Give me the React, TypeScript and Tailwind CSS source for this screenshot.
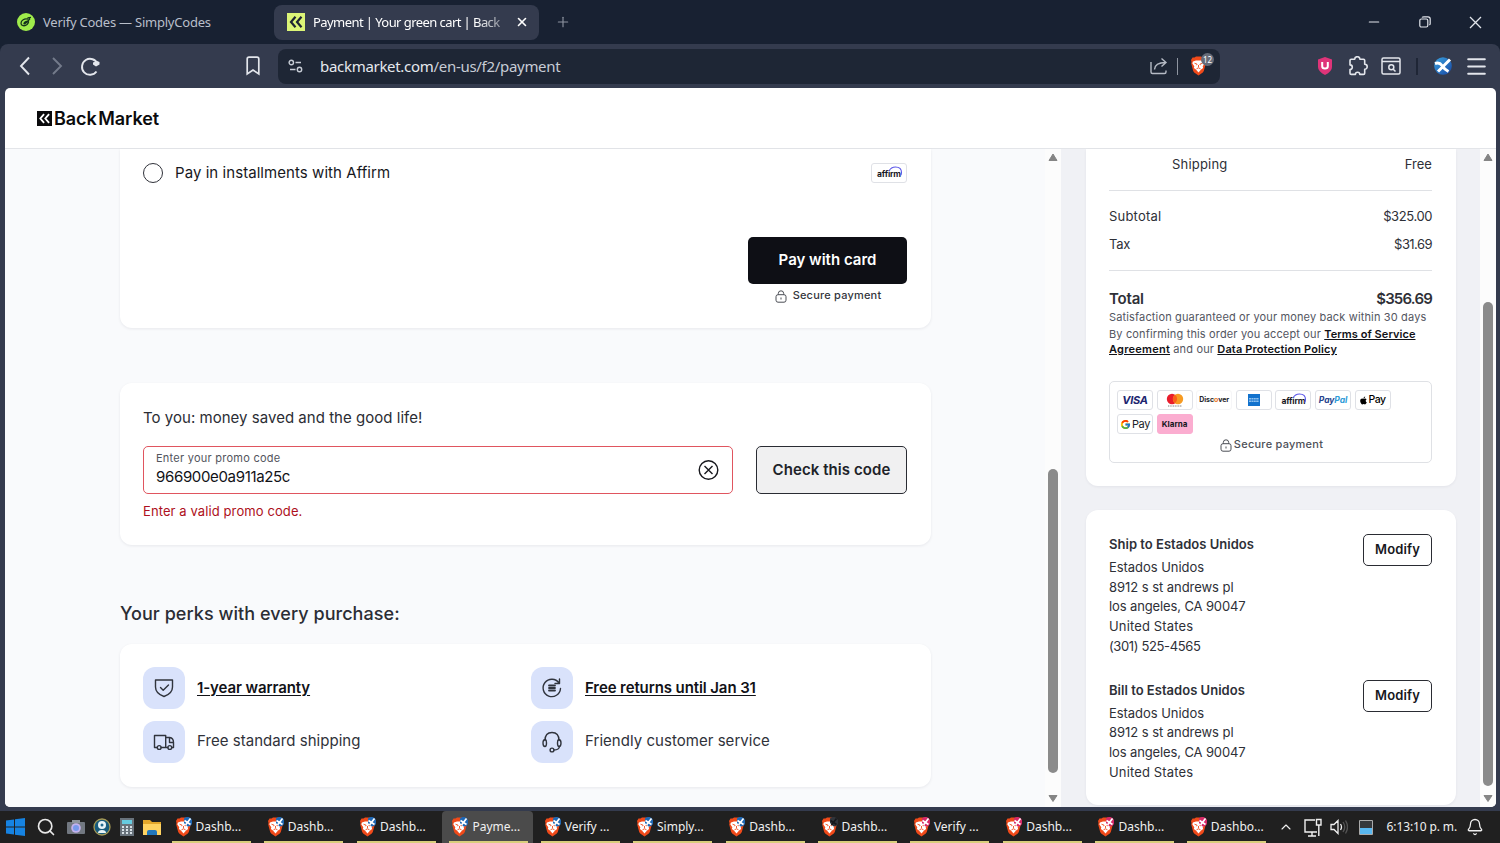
import * as React from 'react';
import { Bell, ChevronUp, Menu, Minus, Plus, Search, X } from 'lucide-react';
import { FaApple } from 'react-icons/fa';
import { FcGoogle } from 'react-icons/fc';

const TASKS = [
  { label: 'Dashb...', badge: '#1f68b4' },
  { label: 'Dashb...', badge: '#1f68b4' },
  { label: 'Dashb...', badge: '#1f68b4' },
  { label: 'Payme...', badge: '#1f68b4', active: true },
  { label: 'Verify ...', badge: '#1f68b4' },
  { label: 'Simply...', badge: '#1f68b4' },
  { label: 'Dashb...', badge: '#1f68b4' },
  { label: 'Dashb...', badge: '#30343a' },
  { label: 'Verify ...', badge: '#d52a68' },
  { label: 'Dashb...', badge: '#d52a68' },
  { label: 'Dashb...', badge: '#d52a68' },
  { label: 'Dashbo...', badge: '#d52a68' },
];

const BraveIcon = ({ badge }: { badge?: string }): React.ReactNode => (
  <svg width="17" height="20" viewBox="0 0 17 20" className="shrink-0">
    <path d="M4.500 1.500 6 .500h5l1.500 1h2L16 4l-.5 2 .3 1.500-2 7.500-1 1.500L8.500 19.500 4.200 16.500l-1-1.500-2-7.500L1.500 6 1 4l1.500-2.500z" fill="#f04a1a" />
    <path d="M3 5.500 6 4.500h5l3 1 .7 1.700-2 3 .4 1.800-2 1.500L8.500 16.500 5.900 13.500 3.900 12l.4-1.800-2-3z" fill="#fff" />
    <path d="M4.500 7.200l2.600 1-.6 1M12.500 7.200l-2.600 1 .6 1M8.500 9v2.200M6.500 12.800l2-1 2 1" stroke="#f04a1a" strokeWidth=".9" fill="none" />
    {badge && (
      <>
        <path d="M9 1.500A4.800 4.800 0 0 1 17 3v4a5 5 0 0 1-4.500 2.500L9 6z" fill={badge} />
        <path d="M9.500 3.500l6 4M15.500 1.500l-5 6.500" stroke={badge === '#30343a' ? '#15171a' : '#fff'} strokeWidth="1.700" />
      </>
    )}
  </svg>
);

const LockIcon = ({ className }: { className?: string }): React.ReactNode => (
  <svg width="12" height="13" viewBox="0 0 12 13" fill="none" stroke="#4b4e55" className={className}>
    <rect x="1" y="4.700" width="10" height="7.500" rx="2" />
    <path d="M3.300 4.700V3.500a2.700 2.700 0 0 1 5.400 0v1.200M6 7.500v2" />
  </svg>
);

const Chevrons = ({ size, bg, fg }: { size: number; bg: string; fg: string }): React.ReactNode => (
  <svg width={size} height={size} viewBox="0 0 18 18" className="shrink-0">
    <rect width="18" height="18" fill={bg} />
    <path d="M8.500 3.800 4 9l4.500 5.200M14.500 3.800 10 9l4.500 5.200" fill="none" stroke={fg} strokeWidth="2.200" />
  </svg>
);

const TitleBar = (): React.ReactNode => (
  <div className="flex h-11 items-center text-[13px] text-[#b9bfca]">
    <div className="flex w-[274px] items-center pl-[17px]">
      <svg width="18" height="18" viewBox="0 0 18 18">
        <circle cx="9" cy="9" r="9" fill="#9fec4b" />
        <path d="M11 6.200C7.500 5 4 7.500 4 10.200c0 2.500 3.500 3.500 6 1.300 1.500-1.500 2-3 1-3.300-2-.4-4.500 2-4 2.600.5.500 3-1.300 6-5.300M10.500 4.800l3.500-.5" fill="none" stroke="#14331c" strokeWidth="1.300" />
      </svg>
      <span className="relative top-px ml-2 tracking-[-0.230px] whitespace-nowrap">Verify Codes — SimplyCodes</span>
    </div>
    <div className="flex h-[35px] w-[265px] items-center rounded-lg bg-[#343b4e] pl-[13px] text-white">
      <Chevrons size={18} bg="#dcf577" fg="#1d2433" />
      <span className="relative top-px ml-2 w-[190px] tracking-[-0.570px] whitespace-nowrap [mask-image:linear-gradient(to_right,#000_86%,#0006_100%)]">
        Payment | Your green cart | Back
      </span>
      <X size={14} strokeWidth={2.800} className="ml-[12px] shrink-0" />
    </div>
    <Plus size={16} strokeWidth={1.700} className="ml-4 text-[#8d93a0]" />
    <div className="ml-auto flex items-center pr-[18px] text-[#e2e5eb]">
      <Minus size={16} strokeWidth={1.800} className="mr-[37px]" />
      <svg width="12" height="12" viewBox="0 0 12 12" fill="none" stroke="currentColor" strokeWidth="1.200" className="mr-[38px]">
        <rect x=".8" y="3" width="8" height="8" rx="1.500" />
        <path d="M3 1.500Q3.500.8 5 .8h4q2.200 0 2.200 2.200v4.500q0 1-.8 1.500" />
      </svg>
      <svg width="13" height="13" viewBox="0 0 13 13" stroke="currentColor" strokeWidth="1.300">
        <path d="M1 1l11 11M12 1 1 12" />
      </svg>
    </div>
  </div>
);

const Toolbar = (): React.ReactNode => (
  <div className="flex h-11 items-center rounded-t-lg bg-[#343b4e] text-[#e3e6ec]">
    <svg width="86" height="24" viewBox="0 0 86 24" fill="none" stroke="currentColor" strokeWidth="1.900" className="ml-4">
      <path d="M13 3.500 5 12l8 8.500" />
      <path d="M37 4l8 8-8 8" stroke="#747b8b" />
      <path d="M80.500 17.500a8 8 0 1 1 1-7.500" />
      <path d="M77 8.500l4-1.500 2.500 1v2.500L80 12.500l-3-2z" fill="currentColor" stroke="none" />
    </svg>
    <svg width="14" height="20" viewBox="0 0 14 20" fill="none" stroke="currentColor" strokeWidth="1.700" className="ml-[144px]">
      <path d="M1.200 18V3q0-1.800 1.800-1.800h8q1.800 0 1.800 1.800v15L7 14z" />
    </svg>
    <div className="ml-[18px] flex h-[35px] w-[942px] items-center rounded-lg bg-[#1e2635] pl-[10px]">
      <svg width="15" height="14" viewBox="0 0 15 14" fill="none" stroke="#c7ccd5" strokeWidth="1.400">
        <circle cx="3.300" cy="3.500" r="2.200" />
        <circle cx="11.500" cy="10.500" r="2.200" />
        <path d="M7.500 3.500H13M2 10.500h5.500" />
      </svg>
      <span className="ml-[17px] text-[15px] tracking-[-0.300px] text-[#c7ccd5]">
        <span className="text-[#e6e9ee]">backmarket.com</span>/en-us/f2/payment
      </span>
      <svg width="18" height="18" viewBox="0 0 18 18" fill="none" stroke="#b6bbc5" strokeWidth="1.400" className="ml-auto">
        <path d="M1 5v10q0 1.500 1.500 1.500h12q1.500 0 1.500-1.500v-1.500M4.500 12.500q.5-7 11-7M11.500 1.500 16 5.500l-4.500 4" />
      </svg>
      <span className="mr-3 ml-[9px] h-[17px] w-px bg-[#8e94a0]" />
      <div className="relative mr-[13px] h-5 w-[17px]">
        <BraveIcon />
        <span className="absolute -top-[3px] left-[11px] flex h-[13px] w-[13px] items-center justify-center rounded-full bg-[#656b78] text-[8px] text-white">12</span>
      </div>
    </div>
    <svg width="16" height="20" viewBox="0 0 16 20" className="ml-[97px]">
      <path d="M8 1l7 2.500V11q0 4.500-7 8-7-3.500-7-8V3.500z" fill="#df3479" />
      <path d="M5.200 6v4.200q0 2.300 2.800 2.300t2.800-2.300V6" fill="none" stroke="#fff" strokeWidth="2" />
    </svg>
    <svg width="20" height="20" viewBox="0 0 20 20" fill="none" stroke="currentColor" strokeWidth="1.600" className="ml-[15px]">
      <path d="M2 4.500q0-1.200 1.200-1.200h3.500a2.600 2.600 0 0 1 5.200 0h3.600q1.200 0 1.200 1.200v3.700a2.500 2.500 0 0 1 0 5v4q0 1.200-1.200 1.200h-3.700a2.200 2.200 0 0 0-4.400 0H3.200Q2 18.400 2 17.200v-3.700a2.300 2.300 0 0 0 0-4.600z" strokeLinejoin="round" />
    </svg>
    <svg width="20" height="18" viewBox="0 0 20 18" fill="none" stroke="currentColor" strokeWidth="1.500" className="ml-[13px]">
      <rect x="1" y="1" width="18" height="16" rx="1.500" />
      <path d="M1 4.500h18M12 12l2.500 2.500" />
      <circle cx="10.300" cy="10.200" r="2.500" />
    </svg>
    <span className="ml-[15px] h-[17px] w-[2px] bg-[#1f2636]" />
    <svg width="18" height="18" viewBox="0 0 18 18" className="ml-4">
      <defs>
        <linearGradient id="profile" x1="0" y1="0" x2="1" y2="1">
          <stop offset="0" stopColor="#3aa2df" />
          <stop offset="1" stopColor="#1747a4" />
        </linearGradient>
      </defs>
      <circle cx="9" cy="9" r="8.800" fill="url(#profile)" />
      <path d="M1 6.500q4.500-1.500 7 2 2.500 4 6.500 6M16 2.500 4 14.500" fill="none" stroke="#fff" strokeWidth="3" />
    </svg>
    <Menu size={25} strokeWidth={1.900} className="ml-[12px]" />
  </div>
);

const AffirmLogo = (): React.ReactNode => (
  <span className="relative pt-[3px] text-[8.500px] leading-none font-bold tracking-[-0.200px] text-[#17181f]">
    affirm
    <svg width="15" height="11" viewBox="0 0 15 11" className="absolute -top-[1px] left-[11px]">
      <path d="M1 5Q3 1 7.500 1q6 0 6 5.500 0 2-1 3" fill="none" stroke="#5a55e8" strokeWidth="1.100" />
    </svg>
  </span>
);

const PayBadge = ({ children, className = 'border-[#dfe1e6] bg-white' }: { children: React.ReactNode; className?: string }): React.ReactNode => (
  <span className={`flex h-5 w-9 items-center justify-center rounded-[3px] border ${className}`}>
    {children}
  </span>
);

const PaymentCard = (): React.ReactNode => (
  <section className="h-[179px] rounded-b-xl bg-white pt-[14px] pr-6 pl-[23px] shadow-[0_1px_3px_rgba(20,25,45,0.08)]">
    <div className="flex h-5 items-center">
      <span className="h-5 w-5 rounded-full border-[1.500px] border-[#30323a]" />
      <span className="ml-3 text-[15px] tracking-[0.060px] text-[#17181d]">Pay in installments with Affirm</span>
      <span className="ml-auto"><PayBadge><AffirmLogo /></PayBadge></span>
    </div>
    <div className="mt-[54px] ml-auto w-[159px]">
      <button className="h-[47px] w-full rounded-[5px] bg-[#0e0f15] text-[15px] font-semibold text-white">Pay with card</button>
      <p className="mt-[4px] flex items-center justify-center pl-px text-[11px] leading-[15px] font-medium tracking-[0.200px] text-[#34363d]">
        <LockIcon className="relative top-px mr-[6px]" />
        Secure payment
      </p>
    </div>
  </section>
);

const PromoCard = (): React.ReactNode => (
  <section className="mt-[55px] h-[162px] rounded-xl bg-white px-[23px] pt-[25px] shadow-[0_1px_3px_rgba(20,25,45,0.08)]">
    <h3 className="text-[15px] leading-5 tracking-[0.030px] text-[#2b2d34]">To you: money saved and the good life!</h3>
    <div className="mt-[18px] flex gap-[23px]">
      <div className="flex h-[48px] w-[590px] items-center rounded-[5px] border border-[#e0555f] pr-[13px] pl-3">
        <div>
          <div className="text-[11px] leading-[14px] tracking-[0.250px] text-[#52555d]">Enter your promo code</div>
          <div className="mt-px mb-px text-[15px] leading-[22px] tracking-[-0.340px] text-[#111217]">966900e0a911a25c</div>
        </div>
        <svg width="22" height="22" viewBox="0 0 22 22" fill="none" stroke="#17181d" strokeWidth="1.400" className="ml-auto">
          <circle cx="11.500" cy="11" r="9.300" />
          <path d="M7.500 7l8 8M15.500 7l-8 8" />
        </svg>
      </div>
      <button className="h-[48px] w-[151px] rounded-[5px] border border-[#2a2c33] bg-[#f0f0f1] text-[15px] font-semibold tracking-[0.080px] text-[#202228]">Check this code</button>
    </div>
    <p className="mt-[8px] text-[13px] leading-[18px] tracking-[0.100px] text-[#ad1020]">Enter a valid promo code.</p>
  </section>
);

const Perk = ({ icon, label, link }: { icon: React.ReactNode; label: string; link?: boolean }): React.ReactNode => (
  <div className="flex items-center gap-3">
    <span className="flex h-[42px] w-[42px] items-center justify-center rounded-xl bg-[#d9e2fb]">
      <svg width="22" height="22" viewBox="0 0 22 22" fill="none" stroke="#30343d" strokeWidth="1.400" strokeLinecap="round" strokeLinejoin="round">
        {icon}
      </svg>
    </span>
    <span className={link ? 'text-[15px] font-semibold tracking-[-0.100px] text-[#111217] underline underline-offset-2' : 'relative -top-px text-[15px] tracking-[0.040px] text-[#30323a]'}>{label}</span>
  </div>
);

const Perks = (): React.ReactNode => (
  <>
    <h2 className="mt-[56px] text-[18px] leading-[26px] font-medium tracking-[0.050px] text-[#2b2d34]">Your perks with every purchase:</h2>
    <section className="mt-[17px] grid h-[143px] grid-cols-[388px_1fr] content-start gap-y-3 rounded-xl bg-white px-[23px] pt-[23px] shadow-[0_1px_3px_rgba(20,25,45,0.08)]">
      <Perk link label="1-year warranty" icon={<path d="M2.500 3h17v7q0 6.500-8.500 9.500-8.500-3-8.500-9.500zM7.500 10.500l2.700 2.700L15.500 8" />} />
      <Perk link label="Free returns until Jan 31" icon={<><path d="M18 6a8.700 8.700 0 1 0 1.500 5.500M18.500 2v4.500H14" /><path d="M8 8.500h6M8 11h6M8 13.500h6" strokeWidth="1.800" /></>} />
      <Perk label="Free standard shipping" icon={<><path d="M4.200 16.500H1.500v-12h11.200v12H8.200M12.700 6.500h4q3.800.5 3.800 5v5h-1.700M16.500 7v4.500h4M12.700 16.500h2" /><circle cx="6.200" cy="16.500" r="1.900" /><circle cx="16.800" cy="16.500" r="1.900" /></>} />
      <Perk label="Friendly customer service" icon={<><path d="M4 9.500Q4 1.500 11 1.500t7 8M18.500 15.500q-.5 3.500-5.500 3.500" /><path d="M4.500 8.500q-2.500 0-2.500 3.500t2 3.500q1.500 0 1.500-3.500 0-3-1-3.500zM17.500 8.500q2.500 0 2.500 3.500t-2 3.500q-1.500 0-1.500-3.500 0-3 1-3.500z" /><circle cx="11" cy="19" r="1.900" /></>} />
    </section>
  </>
);

const ScrollBar = ({ before, thumb }: { before: string; thumb: string }): React.ReactNode => (
  <div className="flex w-4 shrink-0 flex-col items-center bg-[#fcfcfc] pt-[3px] pb-1">
    <svg width="10" height="10" viewBox="0 0 10 10"><path d="M5 2l4 6.500H1z" fill="#858585" stroke="#858585" strokeLinejoin="round" /></svg>
    <div className={before} />
    <div className={`w-[10px] rounded-full bg-[#8b8b8b] ${thumb}`} />
    <svg width="10" height="10" viewBox="0 0 10 10" className="mt-auto"><path d="M5 8.500l4-6H1z" fill="#858585" stroke="#858585" strokeLinejoin="round" /></svg>
  </div>
);

const Address = ({ title, lines }: { title: string; lines: string[] }): React.ReactNode => (
  <div className="flex items-start justify-between">
    <div className="pt-px text-[13px] leading-[19.800px] tracking-[-0.050px] text-[#2e3037]">
      <h4 className="mb-[3px] font-semibold tracking-[0.020px]">{title}</h4>
      {lines.map((line) => (
        <p key={line} className={line.startsWith('(') ? 'tracking-[-0.370px]' : line.includes('CA') ? 'tracking-[-0.120px]' : line === 'United States' ? 'tracking-[0.150px]' : ''}>{line}</p>
      ))}
    </div>
    <button className="h-8 w-[69px] rounded-[5px] border border-[#2a2c33] text-[13px] font-semibold tracking-[0.150px] text-[#17181d]">Modify</button>
  </div>
);

const ADDRESS = ['Estados Unidos', '8912 s st andrews pl', 'los angeles, CA 90047', 'United States'];

const Summary = (): React.ReactNode => (
  <section className="h-[337px] rounded-b-xl bg-white pt-[5px] pr-6 pl-[23px] text-[13px] leading-5 text-[#2e3037] shadow-[0_1px_3px_rgba(20,25,45,0.06)]">
    <div className="flex justify-between border-b border-[#dfe1e5] pb-4 pl-[63px]">
      <span className="tracking-[0.200px]">Shipping</span>
      <span className="tracking-[0.050px]">Free</span>
    </div>
    <div className="mt-[15px] flex justify-between">
      <span className="tracking-[0.200px]">Subtotal</span>
      <span className="tracking-[-0.400px]">$325.00</span>
    </div>
    <div className="mt-[8px] flex justify-between border-b border-[#dfe1e5] pb-4">
      <span className="tracking-[-0.300px]">Tax</span>
      <span className="tracking-[-0.550px]">$31.69</span>
    </div>
    <div className="mt-[18px] flex justify-between text-[15px] font-semibold">
      <span className="tracking-[-0.200px]">Total</span>
      <span className="tracking-[-0.800px]">$356.69</span>
    </div>
    <div className="text-[11px] leading-4 tracking-[0.150px] whitespace-nowrap text-[#53565f]">
      <p>Satisfaction guaranteed or your money back within 30 days</p>
      <p className="relative top-px">By confirming this order you accept our <b className="font-semibold tracking-[0.060px] text-[#111217] underline">Terms of Service</b></p>
      <p><b className="font-semibold tracking-[0.240px] text-[#111217] underline">Agreement</b> and our <b className="font-semibold tracking-[0.120px] text-[#111217] underline">Data Protection Policy</b></p>
    </div>
    <div className="mt-6 h-[82px] rounded-[5px] border border-[#dfe1e5] px-[7px] pt-2">
      <div className="flex flex-wrap gap-x-[3.600px] gap-y-[4px]">
        <PayBadge><span className="text-[11px] font-bold tracking-[-0.200px] text-[#20256f] italic">VISA</span></PayBadge>
        <PayBadge>
          <svg width="18" height="14" viewBox="0 0 18 14"><circle cx="6" cy="6" r="5.200" fill="#e91d2c" /><circle cx="12" cy="6" r="5.200" fill="#f79b22" /><path d="M9 1.800a5.200 5.200 0 0 1 0 8.400 5.200 5.200 0 0 1 0-8.400" fill="#fa5f1b" /><path d="M2 13h14" stroke="#777" strokeDasharray="1 .7" /></svg>
        </PayBadge>
        <PayBadge className="border-[#f6f6f8] bg-white"><span className="text-[7px] font-bold tracking-[-0.050px] text-[#25262b]">Disc<span className="text-[#ec7625]">o</span>ver</span></PayBadge>
        <PayBadge><svg width="12" height="12" viewBox="0 0 12 12"><path d="M0 0h12v12H0z" fill="#1272cd" /><path d="M1 4.700h10M1 7.300h10" stroke="#8fc1ef" strokeWidth="1.500" strokeDasharray="2 .4" /></svg></PayBadge>
        <PayBadge><AffirmLogo /></PayBadge>
        <PayBadge><span className="text-[8.500px] font-bold tracking-[-0.100px] text-[#26438d] italic">Pay<span className="text-[#2d9bd8]">Pal</span></span></PayBadge>
        <PayBadge><FaApple size={9} color="#000" className="shrink-0" /><span className="text-[10.500px] font-medium tracking-[-0.400px] text-black">Pay</span></PayBadge>
        <PayBadge><FcGoogle size={11} className="shrink-0" /><span className="ml-px text-[11px] tracking-[-0.400px] text-[#202228]">Pay</span></PayBadge>
        <PayBadge className="border-[#fbadd0] bg-[#fbadd0]"><span className="text-[8px] font-bold text-[#17181d]">Klarna</span></PayBadge>
      </div>
      <p className="flex items-center justify-center pl-[2px] text-[11px] leading-5 font-medium tracking-[0.250px] text-[#4d5058]">
        <LockIcon className="relative top-px mr-[2px]" />
        Secure payment
      </p>
    </div>
  </section>
);

const TaskBar = (): React.ReactNode => (
  <footer className="flex h-8 items-center bg-[#202020] text-[12px] text-[#f0f0f0]">
    <svg width="19" height="18" viewBox="0 0 19 18" className="ml-[6px] shrink-0"><path d="M0 2.500 8 1.500v7H0zM9 1.300 19 0v8.500H9zM0 9.500h8v7L0 15.500zM9 9.500h10V18L9 16.700z" fill="#1683e2" /></svg>
    <Search size={20} strokeWidth={2} className="ml-[11px] shrink-0 text-[#e8e8e8]" />
    <svg width="18" height="16" viewBox="0 0 18 16" className="ml-[11px] shrink-0"><rect y="3" width="18" height="12" rx="1" fill="#727881" /><path d="M5 1h8v3H5z" fill="#8f959d" /><circle cx="9" cy="9" r="4.800" fill="#c3b2ee" /><circle cx="9" cy="9" r="3" fill="#7899ed" /></svg>
    <svg width="18" height="18" viewBox="0 0 18 18" className="ml-2 shrink-0"><circle cx="9" cy="9" r="8" fill="#175b7c" stroke="#a69a56" strokeWidth="1.300" /><path d="M5 15q0-3 4-3t4 3" fill="#e8f4f7" /><circle cx="9" cy="7" r="4" fill="#e8f4f7" /><circle cx="9" cy="7" r="1.500" fill="#236b8e" /></svg>
    <svg width="14" height="18" viewBox="0 0 14 18" className="ml-[9px] shrink-0"><path d="M0 0h14v18H0z" fill="#69737c" /><path d="M2 2h10v4H2z" fill="#66cbe0" /><path d="M2 9h10M2 12h10M2 15h10" stroke="#d9e2e8" strokeWidth="2" strokeDasharray="2 2" /></svg>
    <svg width="18" height="16" viewBox="0 0 18 16" className="ml-[9px] shrink-0"><path d="M0 1h7l2 2h9v13H0z" fill="#e3a72b" /><path d="M0 5h18v11H0z" fill="#ffd361" /><path d="M4 16v-3q0-2 2-2h6q2 0 2 2v3z" fill="#2177bb" /></svg>
    <div className="ml-[4px] flex h-full shrink-0 gap-[1px]">
      {TASKS.map(({ label, badge, active }, i) => (
        <div key={i} className={`flex h-full w-[91.300px] flex-col justify-between pt-[6px] ${active ? 'rounded-t-sm bg-[#4b4b4b]' : ''}`}>
          <span className="flex items-center gap-[4px] pl-[9.500px] whitespace-nowrap"><BraveIcon badge={badge} />{label}</span>
          <span className="ml-[7px] h-[2px] w-[79px] bg-[#d8ce7c]" />
        </div>
      ))}
    </div>
    <ChevronUp size={16} strokeWidth={1.700} className="ml-[6px] shrink-0" />
    <svg width="18" height="19" viewBox="0 0 18 19" fill="none" stroke="currentColor" strokeWidth="1.400" className="ml-[10px] shrink-0"><path d="M11 2H1v12h12M8 14v4M4 18h8M12.500 1.500h4.500V7h-4.500zM14.800 7v11" /></svg>
    <svg width="18" height="16" viewBox="0 0 18 16" fill="none" stroke="currentColor" strokeWidth="1.300" className="ml-2 shrink-0"><path d="M1 5.500h3l4-4v13l-4-4H1zM10.500 5q2 3 0 6" /><path d="M13 3q3.500 5 0 10M15.500 1.500q4 6.500 0 13" stroke="#555" /></svg>
    <svg width="14" height="15" viewBox="0 0 14 15" className="ml-[11px] shrink-0"><path d="M.5.500h13v14H.5z" fill="#35383b" stroke="#aaa" /><path d="M1 8h12v6H1z" fill="#59b8f0" /></svg>
    <span className="ml-[14px] tracking-[-0.120px] whitespace-nowrap">6:13:10 p. m.</span>
    <Bell size={18} strokeWidth={1.700} className="ml-[9px] shrink-0" />
  </footer>
);

const App = (): React.ReactNode => (
  <div className="h-[843px] w-[1500px] overflow-hidden bg-[#182132] font-['Noto_Sans',sans-serif]">
    <TitleBar />
    <Toolbar />
    <div className="h-[723px] bg-[#343b4e] pr-1 pb-1 pl-[5px]">
      <div className="flex h-full flex-col overflow-hidden rounded-[5px] bg-white font-['Inter',sans-serif]">
        <header className="flex h-[61px] items-center border-b border-[#e3e5e9] pl-[32px]">
          <Chevrons size={15} bg="#0b0b0d" fg="#fff" />
          <span className="ml-[2px] text-[18px] font-semibold tracking-[-0.050px] text-[#0b0b0d]">Back&#8202;Market</span>
        </header>
        <div className="flex h-[658px]">
          <main className="w-[1040px] bg-[#f9fafc] pl-[115px]">
            <div className="w-[811px]">
              <PaymentCard />
              <PromoCard />
              <Perks />
            </div>
          </main>
          <ScrollBar before="h-[307px]" thumb="h-[304px]" />
          <aside className="w-[419px] bg-[#f0f1f5] pr-6 pl-[25px]">
            <Summary />
            <section className="mt-6 flex h-[295px] flex-col gap-[23px] rounded-xl bg-white pt-6 pr-6 pl-[23px] shadow-[0_1px_3px_rgba(20,25,45,0.06)]">
              <Address title="Ship to Estados Unidos" lines={[...ADDRESS, '(301) 525-4565']} />
              <Address title="Bill to Estados Unidos" lines={ADDRESS} />
            </section>
          </aside>
          <ScrollBar before="h-[140px]" thumb="h-[484px]" />
        </div>
      </div>
    </div>
    <TaskBar />
  </div>
);

export default App;
